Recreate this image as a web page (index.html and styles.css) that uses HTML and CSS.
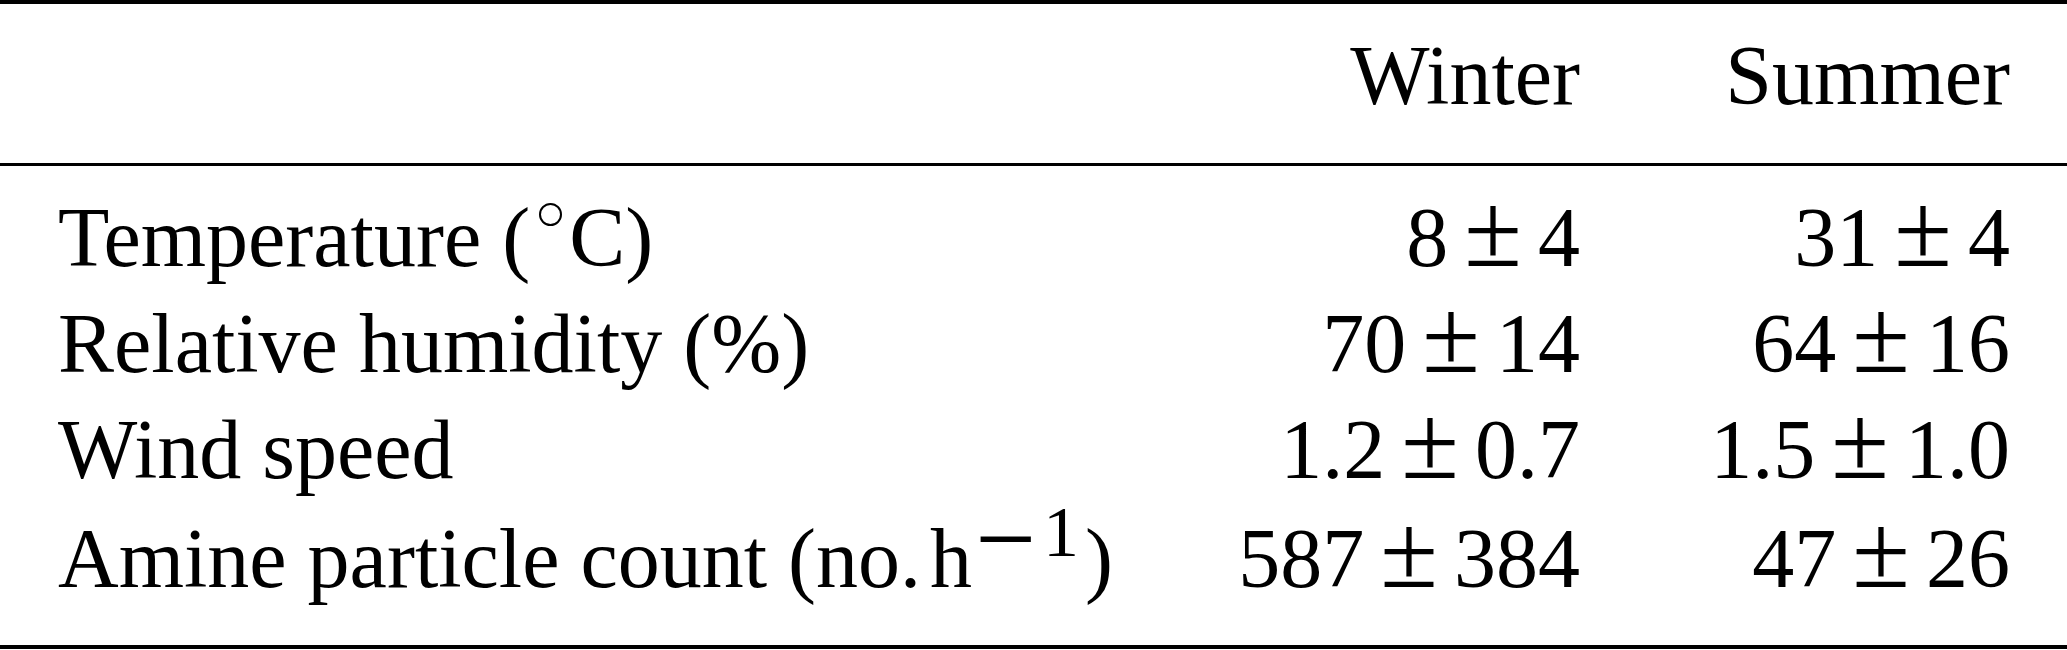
FILE: index.html
```html
<!DOCTYPE html>
<html lang="en">
<head>
    <meta charset="UTF-8">
    <title>Winter and summer conditions</title>
    <link rel="stylesheet" href="styles.css">
</head>
<body>
    <table class="stats">
        <colgroup>
            <col class="col-label">
            <col class="col-winter">
            <col class="col-summer">
        </colgroup>
        <thead>
            <tr>
                <th class="label"></th>
                <th class="num">Winter</th>
                <th class="num last">Summer</th>
            </tr>
        </thead>
        <tbody>
            <tr>
                <td class="label">Temperature (<span class="deg"></span>C)</td>
                <td class="num">8<span class="pm">±</span>4</td>
                <td class="num last">31<span class="pm">±</span>4</td>
            </tr>
            <tr>
                <td class="label">Relative humidity (%)</td>
                <td class="num">70<span class="pm">±</span>14</td>
                <td class="num last">64<span class="pm">±</span>16</td>
            </tr>
            <tr>
                <td class="label">Wind speed</td>
                <td class="num">1.2<span class="pm">±</span>0.7</td>
                <td class="num last">1.5<span class="pm">±</span>1.0</td>
            </tr>
            <tr>
                <td class="label">Amine particle count (no.<span class="thin"></span>h<sup><span class="minus">−</span>1</sup>)</td>
                <td class="num">587<span class="pm">±</span>384</td>
                <td class="num last">47<span class="pm">±</span>26</td>
            </tr>
        </tbody>
    </table>
</body>
</html>
```

FILE: styles.css
```css
body {
    margin: 0;
    background-color: #fff;
    color: #000;
    font-family: "Liberation Serif", "Times New Roman", serif;
    font-size: 84px;
}

.stats {
    width: 2067px;
    border-collapse: collapse;
    table-layout: fixed;
}

.col-label { width: 1100px; }
.col-winter { width: 480px; }
.col-summer { width: 487px; }

.stats th,
.stats td {
    padding: 0;
    line-height: 106px;
    font-weight: normal;
    white-space: nowrap;
}

/* booktabs style rules */
.stats thead tr {
    border-top: 4px solid #000;
    border-bottom: 3px solid #000;
}
.stats tbody {
    border-bottom: 4px solid #000;
}

.stats thead th {
    padding-top: 19px;
    padding-bottom: 34px;
}
.stats tbody tr:first-child td {
    padding-top: 19px;
}
.stats tbody tr:last-child td {
    padding-top: 3px;
    padding-bottom: 33px;
}

.label {
    text-align: left;
    padding-left: 58px !important;
}
.num {
    text-align: right;
}
.last {
    padding-right: 57px !important;
}

/* math plus-minus is bigger than the text one */
.pm {
    font-size: 1.25em;
    line-height: 0;
    margin: 0 16px;
}

.thin {
    display: inline-block;
    width: 9px;
}

/* degree sign drawn like LaTeX \circ */
.deg {
    display: inline-block;
    width: 19px;
    height: 19px;
    border: 2.5px solid #000;
    border-radius: 50%;
    vertical-align: 0.48em;
    margin: 0 7px 0 9px;
}

sup {
    font-size: 72px;
    line-height: 0;
    vertical-align: 31px;
    margin-left: 3px;
    margin-right: 6px;
}

.minus {
    font-size: 1.5em;
    line-height: 0;
    vertical-align: -19px;
    margin-right: 7px;
}
```
